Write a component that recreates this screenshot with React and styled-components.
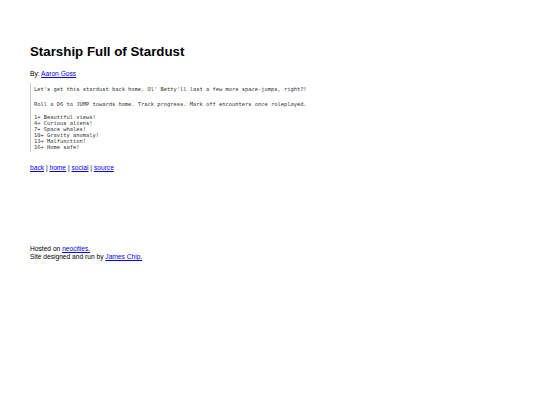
import styled, { createGlobalStyle } from "styled-components";

const GlobalStyle = createGlobalStyle`
    html, body {
        margin: 0;
        padding: 0;
        background: #fff;
    }
    body {
        font-family: "Liberation Sans", Arial, sans-serif;
        color: #000;
    }
`;

const Page = styled.div`
    width: 540px;
    height: 405px;
    box-sizing: border-box;
    padding: 44px 30px 0 30px;
    font-size: 6.65px;
    line-height: 7.7px;
`;

const Title = styled.h1`
    margin: 0;
    font-size: 13.3px;
    line-height: 15.3px;
    font-weight: bold;
`;

const Line = styled.p`
    margin: ${(p) => p.$top || 0}px 0 0 0;
`;

const Link = styled.a`
    color: #0000ee;
    text-decoration: underline;
`;

const Quote = styled.div`
    margin: 5px 0 0 0;
    padding: 3px 0 2px 3px;
    border-left: 1px solid #c8c8c8;
    font-family: "DejaVu Sans Mono", "Liberation Mono", monospace;
    font-size: 5.4px;
    line-height: 6px;
    color: #333;
`;

const QuoteText = styled.p`
    margin: ${(p) => p.$top || 0}px 0 0 0;
    white-space: pre;
`;

const Footer = styled.div`
    margin-top: 74px;
`;

const encounters = [
    "1+ Beautiful views!",
    "4+ Curious aliens!",
    "7+ Space whales!",
    "10+ Gravity anomaly!",
    "13+ Malfunction!",
    "16+ Home safe!",
];

export default function App() {
    return (
        <>
            <GlobalStyle />
            <Page>
                <Title>Starship Full of Stardust</Title>
                <Line $top={11}>
                    By: <Link href="#">Aaron Goss</Link>
                </Line>
                <Quote>
                    <QuoteText>
                        Let's get this stardust back home. Ol' Betty'll last a few more space-jumps, right?!
                    </QuoteText>
                    <QuoteText $top={9.3}>
                        Roll a D6 to JUMP towards home. Track progress. Mark off encounters once roleplayed.
                    </QuoteText>
                    <QuoteText $top={6.4}>{encounters.join("\n")}</QuoteText>
                </Quote>
                <Line $top={12}>
                    <Link href="#">back</Link> | <Link href="#">home</Link> |{" "}
                    <Link href="#">social</Link> | <Link href="#">source</Link>
                </Line>
                <Footer>
                    Hosted on <Link href="#">neocities.</Link>
                    <br />
                    Site designed and run by <Link href="#">James Chip.</Link>
                </Footer>
            </Page>
        </>
    );
}
